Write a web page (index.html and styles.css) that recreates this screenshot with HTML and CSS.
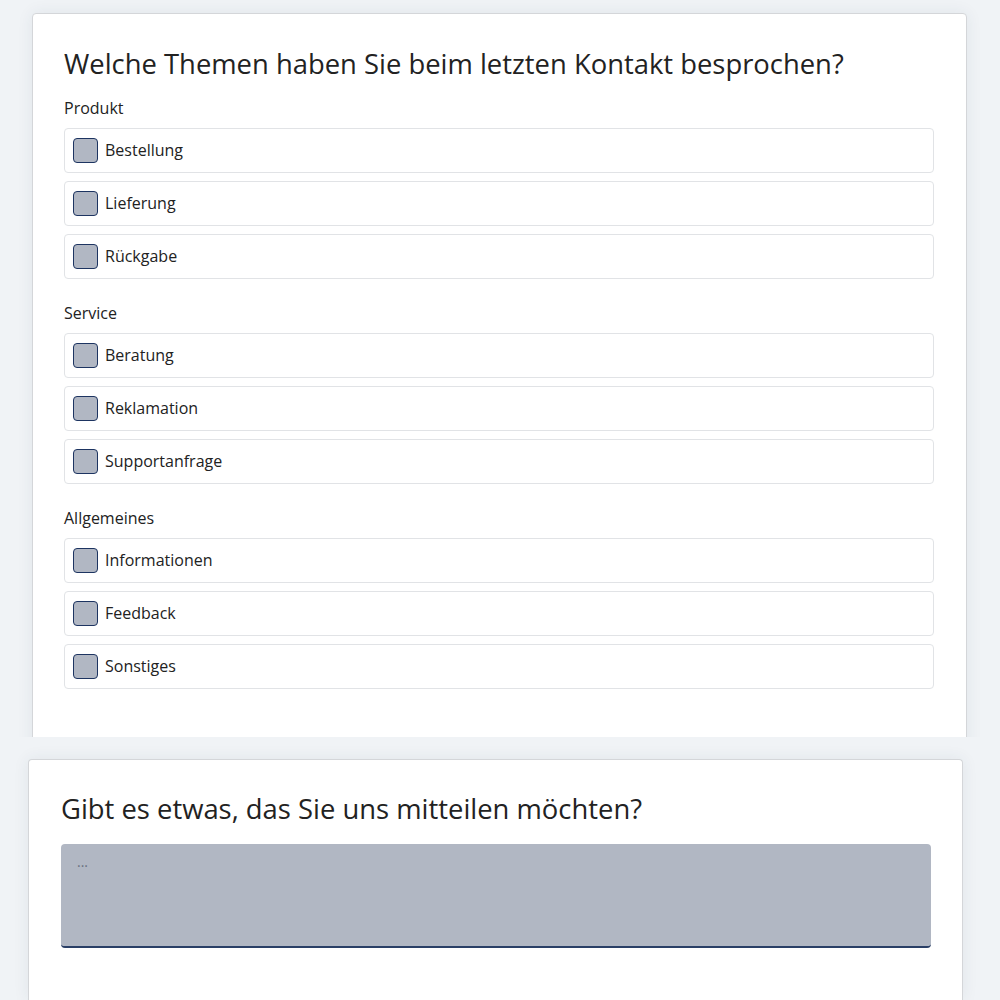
FILE: index.html
```html
<!DOCTYPE html>
<html lang="de">
<head>
  <meta charset="UTF-8" />
  <title>Umfrage</title>
  <link rel="stylesheet" href="styles.css">
</head>
<body>

  <!-- Frage 1: Themen -->
  <div class="panel-clip">
    <div class="card card-topics">
      <h2 class="question">Welche Themen haben Sie beim letzten Kontakt besprochen?</h2>

      <div class="group">
        <div class="group-title">Produkt</div>
        <label class="option"><span class="box"></span>Bestellung</label>
        <label class="option"><span class="box"></span>Lieferung</label>
        <label class="option"><span class="box"></span>Rückgabe</label>
      </div>

      <div class="group">
        <div class="group-title">Service</div>
        <label class="option"><span class="box"></span>Beratung</label>
        <label class="option"><span class="box"></span>Reklamation</label>
        <label class="option"><span class="box"></span>Supportanfrage</label>
      </div>

      <div class="group">
        <div class="group-title">Allgemeines</div>
        <label class="option"><span class="box"></span>Informationen</label>
        <label class="option"><span class="box"></span>Feedback</label>
        <label class="option"><span class="box"></span>Sonstiges</label>
      </div>
    </div>
  </div>

  <!-- Frage 2: Freitext -->
  <div class="card card-comment">
    <h2 class="question">Gibt es etwas, das Sie uns mitteilen möchten?</h2>
    <textarea class="comment" placeholder="..."></textarea>
  </div>

</body>
</html>
```

FILE: styles.css
```css
/* Reset & base */
* { box-sizing: border-box; margin: 0; padding: 0; }
body {
  font-family: 'Open Sans', 'Noto Sans', sans-serif;
  background: #f0f3f6;
  color: #222;
  height: 1000px;
  overflow: hidden;
}

/* First panel is cut off at the bottom */
.panel-clip {
  height: 737px;
  overflow: hidden;
  padding: 13px 33px 0 32px;
}

/* Cards */
.card {
  background: #fff;
  border: 1px solid #d4d6d9;
  border-radius: 4px;
  box-shadow: 0 0 16px rgba(40, 60, 90, 0.08);
}
.card-topics {
  height: 800px;
  padding: 32px 32px 0 31px;
}
.card-comment {
  width: 935px;
  margin: 22px 0 0 28px;
  height: 241px;
  border-bottom: none;
  border-radius: 4px 4px 0 0;
  padding: 31px 31px 0 32px;
}

.question {
  font-size: 27.4px;
  font-weight: 400;
  line-height: 36px;
  color: #222;
  margin-bottom: 15px;
}
.card-comment .question { margin-bottom: 17px; }

/* Option groups */
.group { margin-bottom: 23px; }
.group-title {
  font-size: 16px;
  line-height: 22px;
  margin-bottom: 9px;
  color: #222;
}
.option {
  display: flex;
  align-items: center;
  gap: 7px;
  height: 45px;
  padding: 0 8px 1px;
  border: 1px solid #e1e3e6;
  border-radius: 4px;
  font-size: 16px;
  color: #222;
  margin-bottom: 8px;
}
.option:last-child { margin-bottom: 0; }
.box {
  width: 25px;
  height: 25px;
  flex: 0 0 25px;
  background: #b1b7c3;
  border: 1.5px solid #1d3461;
  border-radius: 4px;
}

/* Textarea */
.comment {
  display: block;
  width: 100%;
  height: 104px;
  padding: 8px 16px;
  border: none;
  border-bottom: 2px solid #2a3f66;
  border-radius: 4px;
  background: #b1b7c3;
  font-family: inherit;
  font-size: 14px;
  resize: none;
  outline: none;
}
.comment::placeholder { color: #6a7180; }
```
